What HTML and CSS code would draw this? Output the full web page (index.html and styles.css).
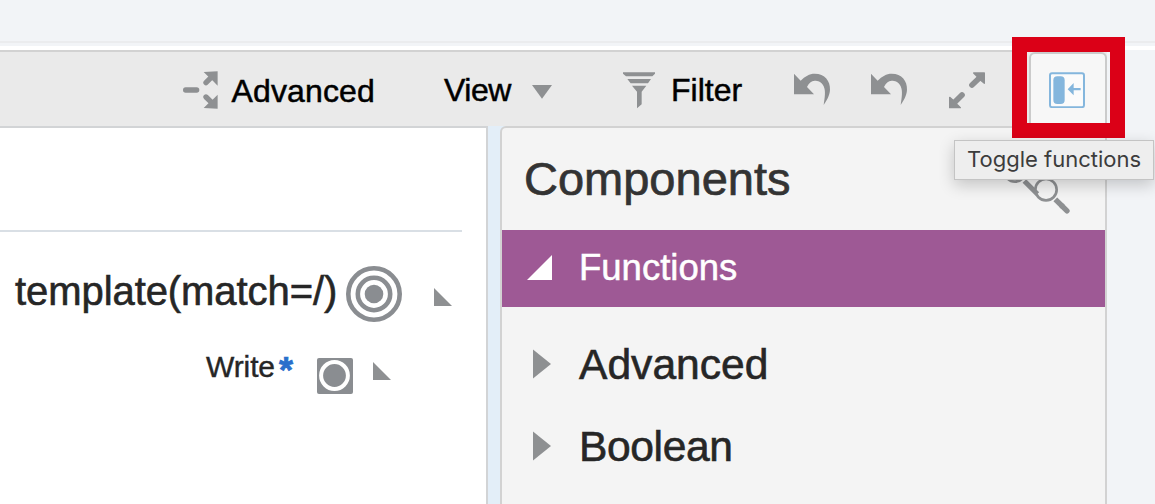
FILE: index.html
```
<!DOCTYPE html>
<html lang="en">
<head>
<meta charset="utf-8">
<title>Mapper</title>
<link rel="stylesheet" href="styles.css">
</head>
<body>
<div class="app">
  <header class="topstrip"></header>
  <nav class="toolbar">
    <button class="tool tool-advanced">
      <svg class="ico-branch" viewBox="38 122 106 114"><g stroke="#8e9092" stroke-width="16" stroke-linecap="round"><path d="M46 179H79"/><path d="M107 157L125 139M107 200L125 218"/></g><path fill="#8e9092" d="M100 125L142 123V166L129 153L113 138ZM100 233L142 235V193L129 206L113 220Z"/></svg>
      <span class="label label-low">Advanced</span>
    </button>
    <button class="tool tool-view">
      <span class="label">View</span>
      <svg class="ico-caret" viewBox="0 0 20 14"><path fill="#8e9092" d="M0 0H20L10 13.7Z"/></svg>
    </button>
    <button class="tool tool-filter">
      <svg class="ico-filter" viewBox="579 125 96 111"><path fill="#8e9092" d="M579 126H675V130L667 138H588L579 130ZM592 146H663L654 159H602ZM606 166H649L635 184V222L621 234V184Z"/></svg>
      <span class="label">Filter</span>
    </button>
    <svg class="ico-undo" viewBox="42 40 111 99"><path fill="#8e9092" d="M42 42L62 63C75 50 88 42 104 42C135 42 151 64 150 90C149 108 140 122 131 136C134 115 138 95 131 80C125 66 113 63 104 63C94 64 86 70 81 82L102 104H42Z"/></svg>
    <svg class="ico-undo ico-undo-next" viewBox="42 40 111 99"><path fill="#8e9092" d="M42 42L62 63C75 50 88 42 104 42C135 42 151 64 150 90C149 108 140 122 131 136C134 115 138 95 131 80C125 66 113 63 104 63C94 64 86 70 81 82L102 104H42Z"/></svg>
    <svg class="ico-expand" viewBox="507 35 108 111"><path stroke="#8e9092" stroke-width="17" stroke-linecap="round" d="M576 74L598 53M546 104L524 126"/><path fill="#8e9092" stroke="#8e9092" stroke-width="4" stroke-linejoin="round" d="M581 38H613V69L601 59L590 47ZM541 142H509V111L521 121L532 133Z"/></svg>
    <button class="tab">
      <svg class="ico-toggle" viewBox="147 125 108 109"><rect x="150" y="128.500" width="102" height="102" rx="6" fill="#fff" fill-opacity=".5" stroke="#84b6dd" stroke-width="6"/><rect x="160" y="138" width="34" height="83" rx="12" fill="#84b6dd"/><path fill="#84b6dd" d="M203 176.500L221 158V173H242V180H221V195Z"/></svg>
    </button>
  </nav>
  <div class="content">
    <main class="workspace">
      <div class="rule"></div>
      <div class="node node-template">
        <span class="node-name">template(match=/)</span>
        <svg class="ico-target" viewBox="0 0 56 56"><g fill="none" stroke="#8a8d91"><circle cx="28" cy="28" r="25.700" stroke-width="4.600"/><circle cx="28" cy="28" r="16.200" stroke-width="4.600"/></g><circle cx="28" cy="28" r="9.300" fill="#8a8d91"/></svg>
        <svg class="ico-corner" viewBox="0 0 18 18"><path fill="#8e9092" d="M0 0V18H18Z"/></svg>
      </div>
      <div class="node node-write">
        <span class="node-name node-name-small">Write</span>
        <span class="required">*</span>
        <svg class="ico-square" viewBox="0 0 36 36"><rect width="36" height="36" rx="2" fill="#8a8d91"/><circle cx="17.500" cy="17.500" r="13.400" fill="none" stroke="#fff" stroke-width="4"/></svg>
        <svg class="ico-corner ico-corner-write" viewBox="0 0 18 18"><path fill="#8e9092" d="M0 0V18H18Z"/></svg>
      </div>
    </main>
    <aside class="panel">
      <div class="panel-head">
        <h1 class="panel-title">Components</h1>
        <svg class="ico-search" viewBox="188 88 206 166"><g fill="none" stroke="#8e9092"><circle cx="224" cy="124" r="32" stroke-width="8"/><circle cx="317" cy="180" r="32" stroke-width="8"/><path stroke-width="15" d="M252 154L291 193"/><path stroke-width="16" d="M345 209L368 232"/><path stroke-width="16" stroke-linecap="round" d="M364 228L380 244"/></g></svg>
      </div>
      <div class="group">
        <svg class="ico-open" viewBox="0 0 25 25"><path fill="#fff" d="M25 0V25H0Z"/></svg>
        <span class="group-name">Functions</span>
      </div>
      <ul class="items">
        <li class="item"><svg class="ico-closed" viewBox="0 0 18 30"><path fill="#8e9092" d="M0 .5L18 15L0 29.500Z"/></svg><span>Advanced</span></li>
        <li class="item"><svg class="ico-closed" viewBox="0 0 18 30"><path fill="#8e9092" d="M0 .5L18 15L0 29.500Z"/></svg><span class="item-tight">Boolean</span></li>
      </ul>
    </aside>
  </div>
  <div class="highlight"></div>
  <div class="tooltip">Toggle functions</div>
</div>
</body>
</html>
```
FILE: styles.css
```
* { box-sizing: border-box; }
body {
  margin: 0;
  font-family: "Liberation Sans", Arial, sans-serif;
  background: #f2f4f7;
  overflow: hidden;
}
svg { display: block; flex: none; }
button { border: 0; padding: 0; background: none; font: inherit; color: inherit; }
.app {
  position: relative;
  width: 1155px;
  height: 504px;
  overflow: hidden;
  display: flex;
  flex-direction: column;
  background: #f2f4f7;
}
.topstrip {
  height: 50px;
  flex: none;
  border-bottom: 4px solid #fff;
  background: linear-gradient(#f2f4f7 41px, #ebecee 41px, #ebecee 43px, #f2f4f7 43px);
}
.toolbar {
  width: 1107px;
  height: 76px;
  flex: none;
  display: flex;
  align-items: flex-start;
  background: #eaeaea;
  border-top: 2px solid #d2d2d2;
  color: #000;
}
.tool { display: flex; align-items: flex-start; text-align: left; }
.label { font-size: 32px; line-height: 74px; height: 74px; padding-top: 1px; -webkit-text-stroke: .5px; }
.label-low { padding-top: 2px; letter-spacing: .15px; }
.tool-advanced { width: 261px; margin-left: 183px; }
.ico-branch { width: 35.300px; height: 38px; margin: 18.700px 13.200px 0 0; }
.tool-view { width: 179px; }
.tool-view .label { width: 88px; letter-spacing: -.5px; }
.ico-caret { width: 20px; height: 14px; margin-top: 33px; }
.tool-filter { width: 170.500px; }
.ico-filter { width: 32px; height: 37px; margin: 19.500px 16px 0 0; }
.ico-undo { width: 37px; height: 33px; margin-top: 21.300px; }
.ico-undo-next { margin-left: 40px; }
.ico-expand { width: 36px; height: 37px; margin: 19.500px 0 0 41.500px; }
.tab {
  display: flex;
  align-items: flex-start;
  width: 78px;
  height: 74px;
  margin-left: auto;
  padding: 17.700px 0 0 18px;
  background: #f7f7f7;
  border: 2px solid #cbcbcb;
  border-bottom: 0;
  border-radius: 6px 6px 0 0;
}
.ico-toggle { width: 36px; height: 36.300px; }
.content { flex: 1; display: flex; gap: 12px; background: linear-gradient(90deg, #e3eef8 600px, #f2f4f7 600px); }
.workspace {
  width: 488px;
  background: #fff;
  border: solid #d2d4d6;
  border-width: 2px 2px 0 0;
  color: #262626;
}
.rule { width: 462px; height: 2px; margin-top: 102px; background: #d9dfe5; }
.node { display: flex; align-items: flex-start; }
.node-template { height: 119px; padding-left: 15px; }
.node-name { width: 321px; flex: none; font-size: 40px; line-height: 119px; letter-spacing: -.07px; white-space: nowrap; -webkit-text-stroke: .6px; }
.ico-target { width: 56px; height: 56px; margin: 33.700px 0 0 10px; }
.ico-corner { width: 18px; height: 18px; margin: 56px 0 0 32px; }
.node-write { height: 60px; padding-left: 206px; }
.node-name-small { width: 73px; font-size: 30px; line-height: 32px; letter-spacing: -.1px; -webkit-text-stroke: .4px; }
.required { width: 38px; font-size: 36px; line-height: 39px; font-weight: 700; color: #2a6fcb; -webkit-text-stroke: .7px; }
.ico-square { width: 36px; height: 36px; margin-top: 7px; }
.ico-corner-write { margin: 11px 0 0 20px; }
.panel {
  width: 607px;
  background: #f4f4f4;
  border: 2px solid #d2d2d2;
  border-bottom: 0;
  border-radius: 6px 0 0 0;
}
.panel-head { height: 102px; display: flex; justify-content: space-between; padding: 0 33.500px 0 22px; }
.panel-title { margin: 0; font-size: 47px; line-height: 102px; font-weight: 400; color: #333; -webkit-text-stroke: .7px; }
.ico-search { width: 68.700px; height: 55.300px; margin-top: 31.300px; }
.group { height: 77px; display: flex; padding-left: 25px; background: #9e5995; color: #fff; }
.ico-open { width: 25px; height: 25px; margin: 25px 27px 0 0; }
.group-name { font-size: 36.500px; line-height: 75px; -webkit-text-stroke: .5px; }
.items { list-style: none; margin: 0; padding: 16px 0 0 31px; }
.item { height: 82px; display: flex; align-items: center; gap: 28px; font-size: 42.600px; line-height: 82px; color: #262626; -webkit-text-stroke: .6px; }
.item-tight { letter-spacing: -.4px; }
.ico-closed { width: 18px; height: 30px; }
.highlight {
  position: absolute;
  left: 1012px;
  top: 37px;
  width: 113px;
  height: 101px;
  border: 15px solid #db0017;
}
.tooltip {
  position: absolute;
  left: 954px;
  top: 140px;
  width: 200px;
  height: 40px;
  padding-left: 12px;
  border: 1px solid #c4c4c4;
  background: #eee;
  box-shadow: 0 5px 16px rgba(0, 0, 0, .2);
  font-family: Inter, sans-serif;
  font-size: 22px;
  line-height: 37px;
  color: #3c3c3c;
  white-space: nowrap;
}
```
